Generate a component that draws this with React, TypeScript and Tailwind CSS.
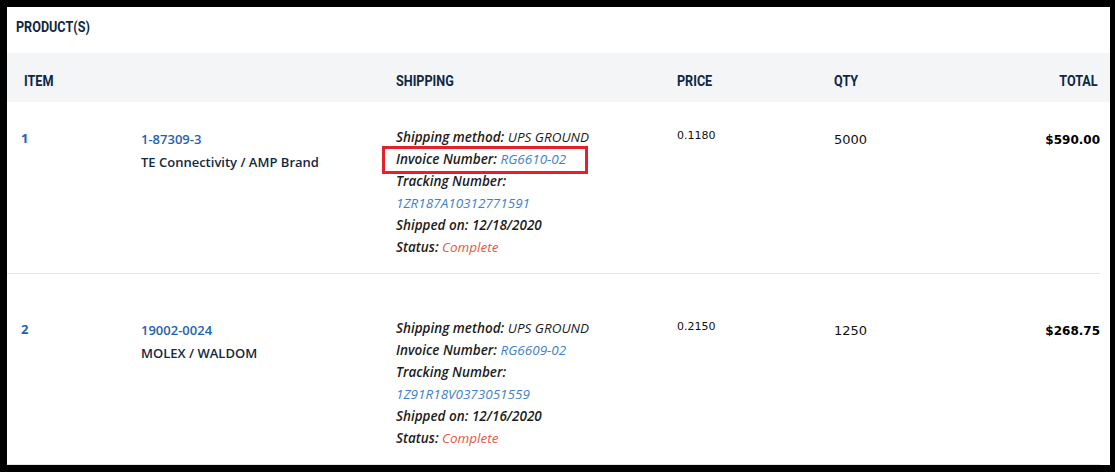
import React from 'react';

const head = { fontFamily: "Roboto,'Liberation Sans',sans-serif" };
const body = { fontFamily: "'Open Sans','Noto Sans',sans-serif" };
const verd = { fontFamily: "'DejaVu Sans','Verdana',sans-serif" };

type Line = { label: string; value?: string; tone?: string; block?: boolean };

const rows = [
  {
    n: '1',
    part: '1-87309-3',
    brand: 'TE Connectivity / AMP Brand',
    price: '0.1180',
    qty: '5000',
    total: '$590.00',
    ship: [
      { label: 'Shipping method:', value: 'UPS GROUND', tone: 'plain' },
      { label: 'Invoice Number:', value: 'RG6610-02', tone: 'link' },
      { label: 'Tracking Number:', value: '1ZR187A10312771591', tone: 'link', block: true },
      { label: 'Shipped on:', value: '12/18/2020', tone: 'strong' },
      { label: 'Status:', value: 'Complete', tone: 'status' },
    ] as Line[],
    highlight: true,
    pt: 'pt-[24px]',
  },
  {
    n: '2',
    part: '19002-0024',
    brand: 'MOLEX / WALDOM',
    price: '0.2150',
    qty: '1250',
    total: '$268.75',
    ship: [
      { label: 'Shipping method:', value: 'UPS GROUND', tone: 'plain' },
      { label: 'Invoice Number:', value: 'RG6609-02', tone: 'link' },
      { label: 'Tracking Number:', value: '1Z91R18V0373051559', tone: 'link', block: true },
      { label: 'Shipped on:', value: '12/16/2020', tone: 'strong' },
      { label: 'Status:', value: 'Complete', tone: 'status' },
    ] as Line[],
    highlight: false,
    pt: 'pt-[43px]',
  },
];

function ShipLine({ line, boxed }: { line: Line; boxed?: boolean }) {
  const valueClass =
    line.tone === 'link'
      ? 'text-[#3f82c4] font-normal'
      : line.tone === 'status'
      ? 'text-[#e5583f] font-normal'
      : line.tone === 'strong'
      ? 'text-[#1c1c1c] font-semibold'
      : 'text-[#1c1c1c] font-normal';
  const value = <span className={valueClass}>{line.value}</span>;
  if (line.block) {
    return (
      <>
        <div className="h-[22px] leading-[22px]">
          <span className="font-semibold text-[#1c1c1c]">{line.label}</span>
        </div>
        <div className="h-[22px] leading-[22px]">{value}</div>
      </>
    );
  }
  return (
    <div className="h-[22px] leading-[22px]">
      <span className={boxed ? 'relative' : ''}>
        {boxed && (
          <span className="absolute left-[-14px] right-[-22px] top-[-4px] bottom-[-6px] border-[3px] border-[#e3202b]" />
        )}
        <span className="font-semibold text-[#1c1c1c]">{line.label}</span> {value}
      </span>
    </div>
  );
}

function H({ children, right }: { children: React.ReactNode; right?: boolean }) {
  return (
    <span className={`inline-block scale-x-[0.84] ${right ? 'origin-right' : 'origin-left'}`}>{children}</span>
  );
}

export default function App() {
  return (
    <div className="h-[472px] w-[1115px] bg-black pt-[7px] pl-[7px] pr-[5px] pb-[7px]">
      <div className="h-full bg-white overflow-hidden">
        <div className="h-[46px] pl-[9px] pt-[10px]">
          <h2 style={head} className="text-[15px] leading-[20px] font-bold text-[#0e2745]">
            <H>PRODUCT(S)</H>
          </h2>
        </div>

        {/* table head */}
        <div
          style={head}
          className="h-[49px] bg-[#f4f5f7] pt-[19px] pl-[17px] pr-[12px] grid grid-cols-[372px_281px_157px_1fr] text-[15px] leading-[18px] font-bold text-[#0e2745]"
        >
          <div><H>ITEM</H></div>
          <div><H>SHIPPING</H></div>
          <div><H>PRICE</H></div>
          <div className="flex justify-between">
            <H>QTY</H>
            <H right>TOTAL</H>
          </div>
        </div>

        {rows.map((r) => (
          <div
            key={r.n}
            className={`mr-[10px] border-b border-[#e6e6e6] pl-[14px] pb-[15px] ${r.pt} grid grid-cols-[120px_255px_281px_157px_1fr]`}
          >
            <div style={body} className="pt-[1px] text-[13px] leading-[22px] font-bold text-[#1d63ad]">{r.n}</div>
            <div style={body} className="pt-[2px] text-[13px] leading-[22px]">
              <div className="font-semibold text-[#1d63ad]">{r.part}</div>
              <div className="mt-[1px] font-semibold text-[#142842]">{r.brand}</div>
            </div>
            <div style={body} className="text-[13.5px] italic">
              {r.ship.map((l, i) => (
                <ShipLine key={i} line={l} boxed={r.highlight && i === 1} />
              ))}
            </div>
            <div style={verd} className="pt-[2px] text-[11px] leading-[16px] text-[#111]">{r.price}</div>
            <div style={verd} className="flex justify-between items-start pt-[6px] text-[13px] leading-[16px] text-[#111]">
              <span>{r.qty}</span>
              <span className="font-bold text-[12px] text-black">{r.total}</span>
            </div>
          </div>
        ))}
      </div>
    </div>
  );
}
